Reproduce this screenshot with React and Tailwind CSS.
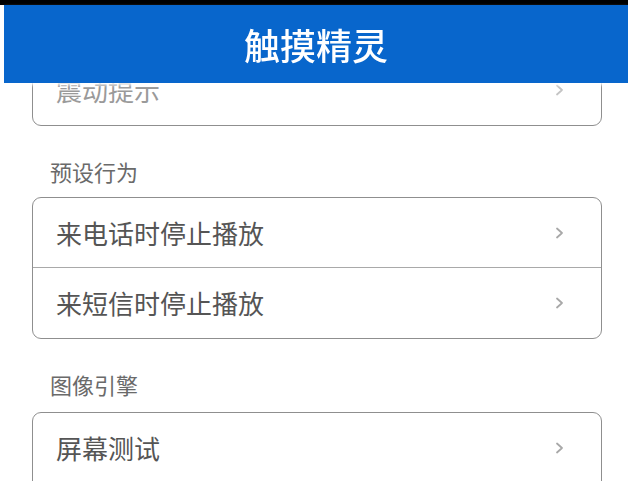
import React from "react"

const Chevron = ({ light }) => (
  <svg width="9" height="12" viewBox="0 0 9 12" fill="none">
    <polyline
      points="2,1.5 7,6 2,10.5"
      stroke={light ? "#c4c4c4" : "#a8a8a8"}
      strokeWidth="1.8"
      strokeLinecap="round"
      strokeLinejoin="round"
    />
  </svg>
)

const Row = ({ label, light }) => (
  <div className="h-[70px] flex items-center justify-between pl-[23px] pr-[37px]">
    <span className={`text-[26px] leading-none ${light ? "text-[#9a9a9a]" : "text-[#555555]"}`}>{label}</span>
    <Chevron light={light} />
  </div>
)

const Card = ({ children, className = "" }) => (
  <div className={`border-[1.5px] border-[#8f8f8f] rounded-[9px] bg-white overflow-hidden ${className}`}>
    {children}
  </div>
)

const SectionLabel = ({ children, className }) => (
  <div className={`pl-[18px] text-[22px] leading-[26px] text-[#6a6a6a] ${className}`}>{children}</div>
)

export default function App() {
  return (
    <div
      className="relative w-full h-[481px] overflow-hidden bg-white"
      style={{ fontFamily: '"Noto Sans CJK SC", "Noto Sans", sans-serif' }}
    >
      <div className="fixed top-0 left-0 right-0 z-10">
        <div className="h-[5px] bg-black" />
        <div className="ml-[4px] h-[78px] bg-[#0866cc] flex items-center justify-center shadow-[0_2px_3px_rgba(255,255,255,0.9)]">
          <h1 className="text-[36px] leading-none font-medium text-white">触摸精灵</h1>
        </div>
      </div>

      <div className="pt-[54px] pl-[32px] pr-[26px]">
        <Card>
          <Row label="震动提示" light />
        </Card>

        <SectionLabel className="mt-[32px] mb-[13px]">预设行为</SectionLabel>
        <Card className="divide-y divide-[#a9a9a9]">
          <Row label="来电话时停止播放" />
          <Row label="来短信时停止播放" />
        </Card>

        <SectionLabel className="mt-[32px] mb-[15px]">图像引擎</SectionLabel>
        <Card className="pb-[40px]">
          <Row label="屏幕测试" />
        </Card>
      </div>
    </div>
  )
}
